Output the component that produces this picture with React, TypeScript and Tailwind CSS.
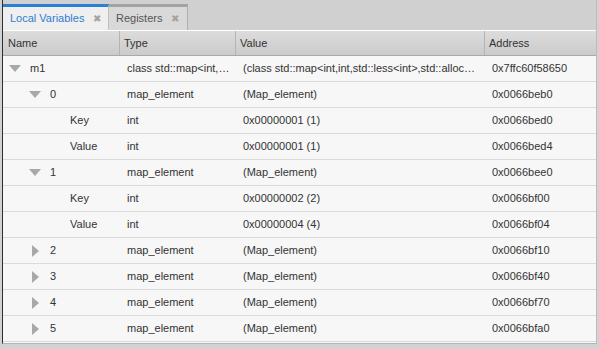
import React from "react";

type Row = {
  name: string;
  level: number;
  toggle?: "open" | "closed";
  type: string;
  value: string;
  address: string;
};

const rows: Row[] = [
  { name: "m1", level: 0, toggle: "open", type: "class std::map<int,…", value: "(class std::map<int,int,std::less<int>,std::alloc…", address: "0x7ffc60f58650" },
  { name: "0", level: 1, toggle: "open", type: "map_element", value: "(Map_element)", address: "0x0066beb0" },
  { name: "Key", level: 2, type: "int", value: "0x00000001 (1)", address: "0x0066bed0" },
  { name: "Value", level: 2, type: "int", value: "0x00000001 (1)", address: "0x0066bed4" },
  { name: "1", level: 1, toggle: "open", type: "map_element", value: "(Map_element)", address: "0x0066bee0" },
  { name: "Key", level: 2, type: "int", value: "0x00000002 (2)", address: "0x0066bf00" },
  { name: "Value", level: 2, type: "int", value: "0x00000004 (4)", address: "0x0066bf04" },
  { name: "2", level: 1, toggle: "closed", type: "map_element", value: "(Map_element)", address: "0x0066bf10" },
  { name: "3", level: 1, toggle: "closed", type: "map_element", value: "(Map_element)", address: "0x0066bf40" },
  { name: "4", level: 1, toggle: "closed", type: "map_element", value: "(Map_element)", address: "0x0066bf70" },
  { name: "5", level: 1, toggle: "closed", type: "map_element", value: "(Map_element)", address: "0x0066bfa0" },
];

const indent = ["pl-[6px]", "pl-[26px]", "pl-[46px]"];

function Toggle({ state }: { state?: "open" | "closed" }) {
  return (
    <span className="w-[21px] shrink-0 flex items-center">
      {state === "open" ? (
        <svg width="12" height="7" viewBox="0 0 12 7">
          <polygon points="0,0 12,0 6,7" fill="#a8a8a8" />
        </svg>
      ) : state === "closed" ? (
        <svg width="7" height="12" viewBox="0 0 7 12" className="ml-[3px]">
          <polygon points="0,0 7,6 0,12" fill="#a8a8a8" />
        </svg>
      ) : null}
    </span>
  );
}

export default function App() {
  return (
    <div
      className="w-[599px] h-[349px] bg-[#d2d2d2] pl-[2px] pr-[2px] pb-[5px] overflow-hidden text-[#333]"
      style={{ fontFamily: '"Liberation Sans", Arial, sans-serif' }}
    >
      <div className="h-full flex flex-col border-l border-[#2e2e2e] border-r border-r-[#bdbdbd] border-b border-b-[#b5b5b5]">
        {/* Tabs */}
        <div className="h-[31px] flex items-end bg-[#d0d0d0] border-b border-white shrink-0">
          <div className="h-[26px] w-[106px] flex items-center pl-[7px] bg-[#efefef] border-t-[3px] border-[#2d7fd6] border-r border-r-[#c0c0c0]">
            <span className="text-[11px] text-[#2f7dd1]">Local Variables</span>
            <span className="ml-[9px] text-[10px] text-[#a4a4a4]">✖</span>
          </div>
          <div className="h-[26px] w-[79px] flex items-center pl-[7px] bg-[#d9d9d9] border-t-[3px] border-[#a3a3a3] border-r border-r-[#b0b0b0]">
            <span className="text-[11px] text-[#555]">Registers</span>
            <span className="ml-[9px] text-[10px] text-[#a4a4a4]">✖</span>
          </div>
        </div>

        {/* Header */}
        <div className="h-[25px] flex shrink-0 bg-gradient-to-b from-[#dcdcdc] to-[#cbcbcb] border-b border-[#a9a9a9] text-[11px]">
          <div className="w-[117px] flex items-center pl-[5px] border-r border-[#b4b4b4]">Name</div>
          <div className="w-[116px] flex items-center pl-[4px] border-r border-[#b4b4b4]">Type</div>
          <div className="w-[249px] flex items-center pl-[4px] border-r border-[#b4b4b4]">Value</div>
          <div className="flex-1 flex items-center pl-[4px]">Address</div>
        </div>

        {/* Rows */}
        <div className="flex-1 bg-[#f7f7f7] overflow-hidden text-[11px]">
          {rows.map((r, i) => (
            <div key={i} className="h-[26px] flex items-center border-b border-[#dadada]">
              <div className={`w-[117px] flex items-center ${indent[r.level]}`}>
                <Toggle state={r.toggle} />
                <span>{r.name}</span>
              </div>
              <div className="w-[116px] pl-[7px] whitespace-nowrap">{r.type}</div>
              <div className="w-[249px] pl-[7px] whitespace-nowrap">{r.value}</div>
              <div className="flex-1 pl-[7px] whitespace-nowrap">{r.address}</div>
            </div>
          ))}
        </div>
      </div>
    </div>
  );
}
